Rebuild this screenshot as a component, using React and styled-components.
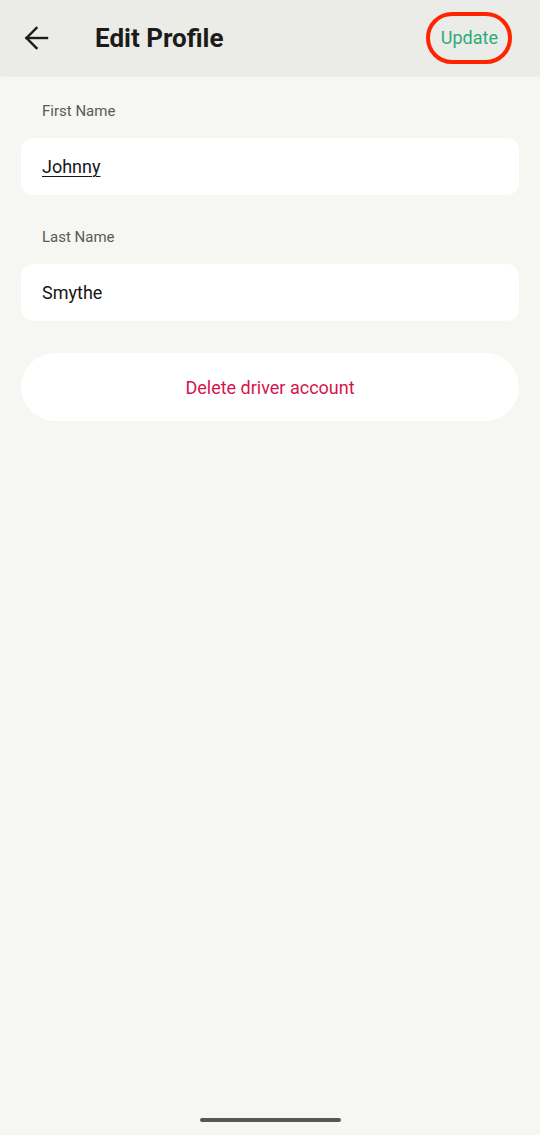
import styled, { createGlobalStyle } from "styled-components";

const GlobalStyle = createGlobalStyle`
  html, body {
    margin: 0;
    padding: 0;
    background: #f6f6f2;
    font-family: Roboto, "Liberation Sans", sans-serif;
  }
`

const Page = styled.div`
  width: 540px;
  height: 1135px;
  display: flex;
  flex-direction: column;
  background: #f6f6f2;
  position: relative;
  overflow: hidden;
`
const Header = styled.header`
  height: 75px;
  display: flex;
  align-items: center;
  padding: 0 42px 0 24px;
  background: #ebebe7;
  box-shadow: 0 1px 2px rgba(0, 0, 0, 0.08);
  box-sizing: border-box;
`
const BackButton = styled.button`
  width: 26px;
  height: 26px;
  padding: 0;
  border: none;
  background: none;
  display: flex;
  color: #1b1b1b;
`
const Title = styled.h1`
  margin: 0 0 0 45px;
  flex: 1;
  font-size: 26px;
  font-weight: 700;
  color: #1b1b19;
`
const UpdateButton = styled.button`
  position: relative;
  border: none;
  background: none;
  padding: 0;
  line-height: 22px;
  font-family: inherit;
  font-size: 18px;
  color: #2bab7c;
  &::after {
    content: "";
    position: absolute;
    left: -15px;
    right: -14px;
    top: -15px;
    bottom: -15px;
    border: 4px solid #ff2400;
    border-radius: 26px;
  }
`
const Content = styled.main`
  padding: 26px 21px 0;
  display: flex;
  flex-direction: column;
`
const Label = styled.div`
  font-size: 15px;
  line-height: 20px;
  color: #5a5a5a;
  padding-left: 21px;
  margin-top: ${p => p.$first ? 0 : 32}px;
`
const Field = styled.div`
  margin-top: 17px;
  height: 57px;
  background: #fff;
  border-radius: 12px;
  display: flex;
  align-items: center;
  padding: 0 21px;
  font-size: 18px;
  color: #161616;
  text-decoration: ${p => p.$underline ? "underline" : "none"};
  text-underline-offset: 3px;
  text-decoration-thickness: 1px;
`
const DeleteButton = styled.button`
  margin-top: 32px;
  height: 68px;
  border: none;
  border-radius: 34px;
  background: #fff;
  font-family: inherit;
  font-size: 18px;
  color: #d4154d;
`
const HomeBar = styled.div`
  position: absolute;
  bottom: 13px;
  left: 200px;
  width: 141px;
  height: 4px;
  border-radius: 2px;
  background: #575757;
`

export default function App() {
  return (
    <>
      <GlobalStyle />
      <Page>
        <Header>
          <BackButton>
            <svg width="26" height="26" viewBox="0 0 26 26" fill="none" stroke="currentColor" strokeWidth="2.4" strokeLinecap="square">
              <path d="M2.5 13H23" />
              <path d="M12.5 3L2.5 13l10 10" />
            </svg>
          </BackButton>
          <Title>Edit Profile</Title>
          <UpdateButton>Update</UpdateButton>
        </Header>
        <Content>
          <Label $first>First Name</Label>
          <Field $underline>Johnny</Field>
          <Label>Last Name</Label>
          <Field>Smythe</Field>
          <DeleteButton>Delete driver account</DeleteButton>
        </Content>
        <HomeBar />
      </Page>
    </>
  )
}
